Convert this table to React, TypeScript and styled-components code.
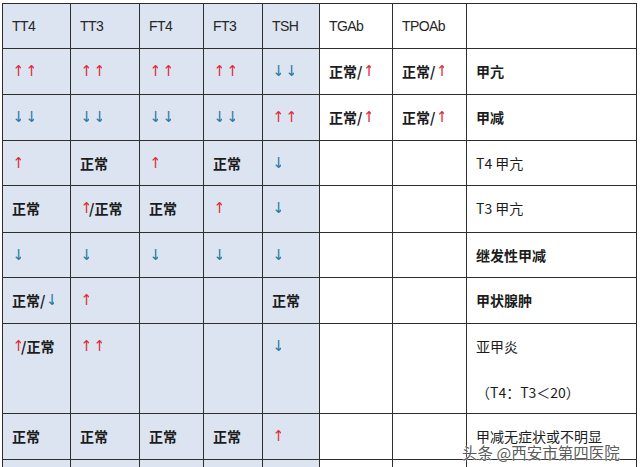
import React from "react";
import styled, { createGlobalStyle } from "styled-components";

const GlobalStyle = createGlobalStyle`
  html, body {
    margin: 0;
    padding: 0;
    background: #ffffff;
    overflow: hidden;
  }
`;

type Row = { height: number; cells: string[] };

const header = ["TT4", "TT3", "FT4", "FT3", "TSH", "TGAb", "TPOAb", ""];
const colWidths = [68, 69, 64, 59, 57, 73, 74, 170];

const rows: Row[] = [
  { height: 46, cells: ["↑↑", "↑↑", "↑↑", "↑↑", "↓↓", "正常/↑", "正常/↑", "甲亢"] },
  { height: 46, cells: ["↓↓", "↓↓", "↓↓", "↓↓", "↑↑", "正常/↑", "正常/↑", "甲减"] },
  { height: 45, cells: ["↑", "正常", "↑", "正常", "↓", "", "", "T4 甲亢"] },
  { height: 47, cells: ["正常", "↑/正常", "正常", "↑", "↓", "", "", "T3 甲亢"] },
  { height: 45, cells: ["↓", "↓", "↓", "↓", "↓", "", "", "继发性甲减"] },
  { height: 46, cells: ["正常/↓", "↑", "", "", "正常", "", "", "甲状腺肿"] },
  { height: 90, cells: ["↑/正常", "↑↑", "", "", "↓", "", "", "亚甲炎"] },
  { height: 46, cells: ["正常", "正常", "正常", "正常", "↑", "", "", "甲减无症状或不明显"] },
  { height: 46, cells: ["", "", "", "", "", "", "", ""] },
];

const lightDiagnoses = ["T4 甲亢", "T3 甲亢", "亚甲炎", "甲减无症状或不明显"];

const Page = styled.div`
  position: relative;
  width: 640px;
  height: 467px;
  padding: 3px 0 0 2px;
  box-sizing: border-box;
  overflow: hidden;
`;

const Table = styled.table`
  border-collapse: collapse;
  table-layout: fixed;
  width: 634px;
  font-family: "Noto Sans CJK SC", sans-serif;
  font-size: 14px;
  color: #1c1c1c;
`;

const Cell = styled.td<{ $shaded: boolean; $light?: boolean }>`
  border: 1px solid #2e2e2e;
  background: ${({ $shaded }) => ($shaded ? "#dde4f1" : "#ffffff")};
  vertical-align: top;
  padding: 12px 0 0 9px;
  line-height: 20px;
  white-space: nowrap;
  font-weight: ${({ $light }) => ($light ? 400 : 700)};
  box-sizing: border-box;
`;

const HeadCell = styled(Cell)`
  font-family: "Liberation Sans", sans-serif;
  font-weight: 400;
  font-size: 14px;
  letter-spacing: -0.6px;
  color: #262626;
`;

const Arrow = styled.span<{ $up: boolean; $pair: boolean }>`
  display: inline-block;
  width: 9px;
  height: 20px;
  overflow: hidden;
  vertical-align: top;
  margin-right: ${({ $pair }) => ($pair ? "4px" : "0")};
  text-align: center;
  font-family: "DejaVu Sans", sans-serif;
  font-size: 15px;
  line-height: 20px;
  font-weight: 400;
  letter-spacing: -4px;
  color: ${({ $up }) => ($up ? "#dd2c3e" : "#2b7aa6")};
`;

const Ratio = styled.div`
  margin-top: 26px;
  font-weight: 400;
`;

const Watermark = styled.div`
  position: absolute;
  left: 462px;
  top: 441px;
  font-family: "Noto Sans CJK SC", sans-serif;
  font-size: 15.5px;
  color: rgba(70, 70, 70, 0.9);
  text-shadow: 0 0 2px #ffffff, 0 0 1px #ffffff;
  white-space: nowrap;
`;

const isArrow = (ch: string) => ch === "↑" || ch === "↓";

const renderText = (text: string) => {
  const chars = Array.from(text);
  return chars.map((ch, i) => {
    if (isArrow(ch)) {
      return (
        <Arrow key={i} $up={ch === "↑"} $pair={isArrow(chars[i + 1] ?? "")}>
          {ch}
        </Arrow>
      );
    }
    return <React.Fragment key={i}>{ch}</React.Fragment>;
  });
};

export default function App() {
  return (
    <>
      <GlobalStyle />
      <Page>
        <Table>
          <colgroup>
            {colWidths.map((w, i) => (
              <col key={i} style={{ width: w }} />
            ))}
          </colgroup>
          <tbody>
            <tr style={{ height: 45 }}>
              {header.map((h, i) => (
                <HeadCell key={i} $shaded={i < 5}>
                  {h}
                </HeadCell>
              ))}
            </tr>
            {rows.map((row, r) => (
              <tr key={r} style={{ height: row.height }}>
                {row.cells.map((c, i) => (
                  <Cell key={i} $shaded={i < 5} $light={i === 7 && lightDiagnoses.includes(c)}>
                    {renderText(c)}
                    {c === "亚甲炎" && <Ratio>（T4：T3＜20）</Ratio>}
                  </Cell>
                ))}
              </tr>
            ))}
          </tbody>
        </Table>
        <Watermark>头条 @西安市第四医院</Watermark>
      </Page>
    </>
  );
}
